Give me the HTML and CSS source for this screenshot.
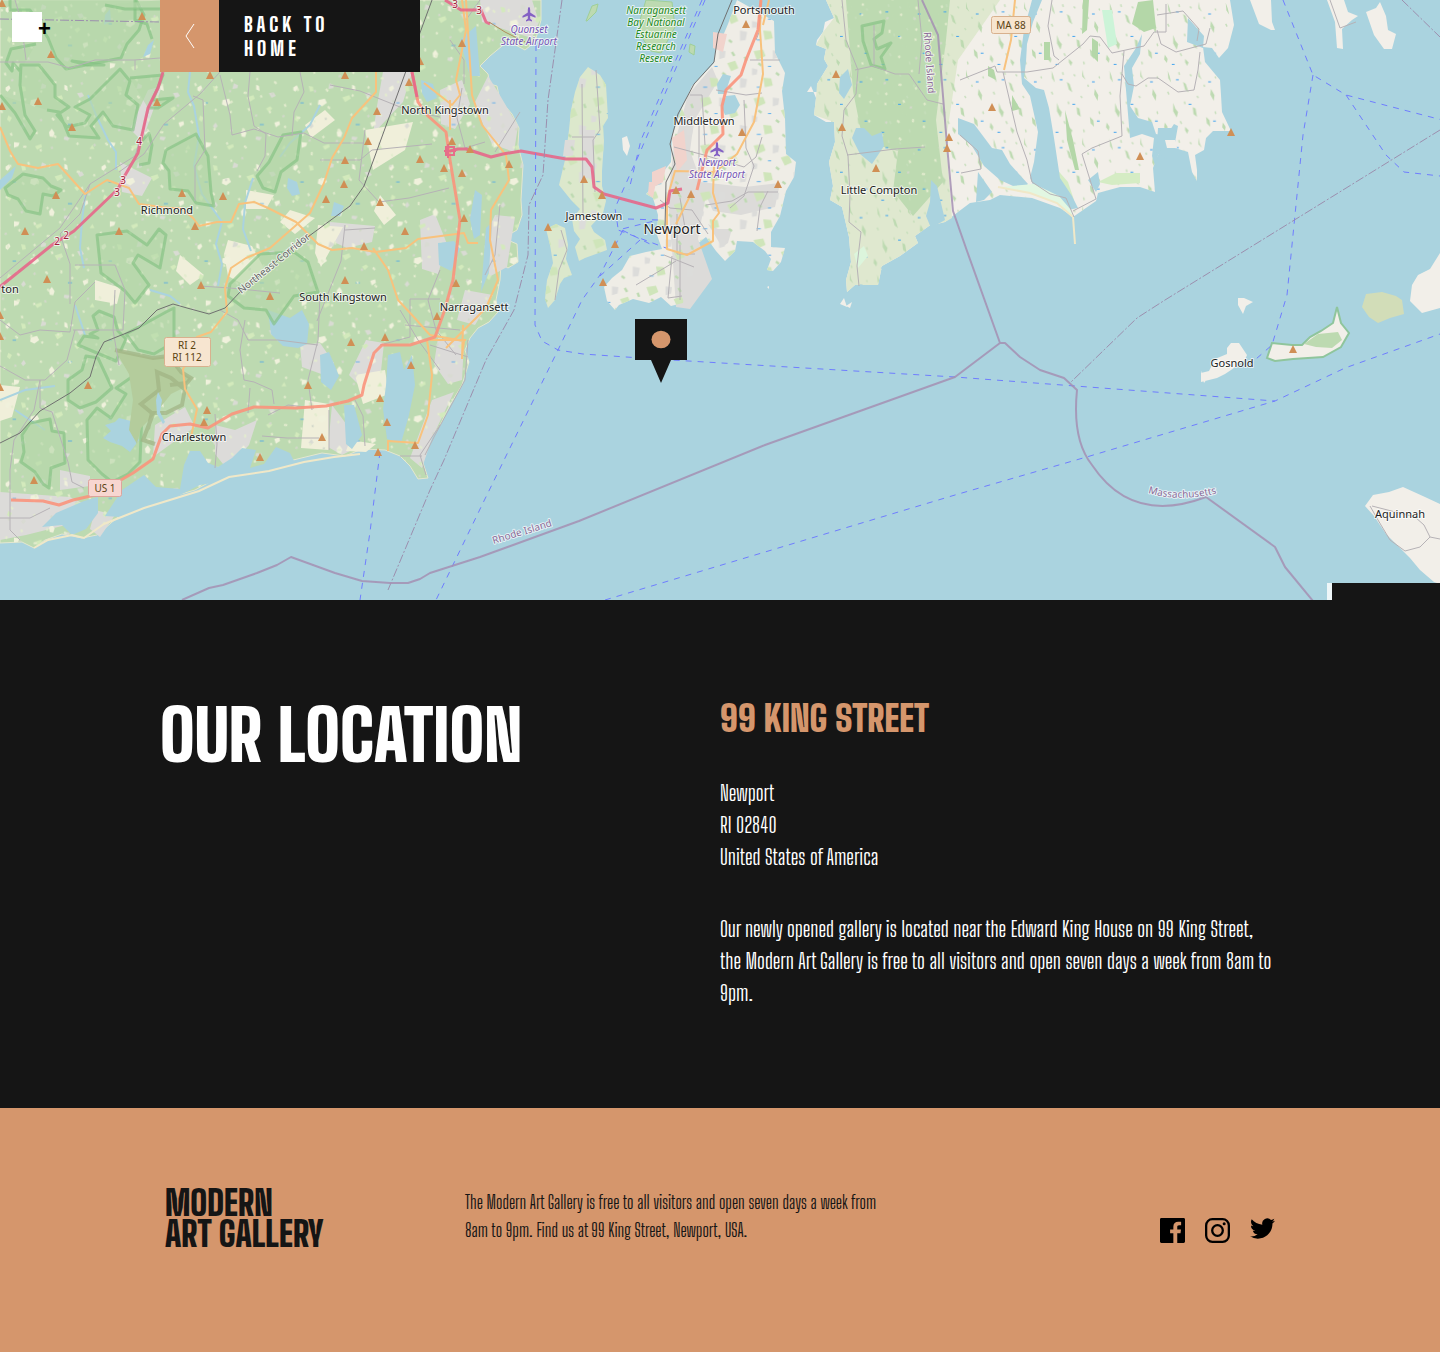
FILE: index.html
```html
<!DOCTYPE html>
<html lang="en">
<head>
<meta charset="utf-8">
<meta name="viewport" content="width=device-width, initial-scale=1">
<title>Modern Art Gallery - Our Location</title>
<link rel="stylesheet" href="styles.css">
</head>
<body>
<header class="map">
<svg class="map-canvas" viewBox="0 0 1440 600" preserveAspectRatio="xMidYMid slice" role="img" aria-label="Map of Newport, Rhode Island">
<defs>
<pattern id="fields" width="137" height="113" patternUnits="userSpaceOnUse" patternTransform="scale(.7)">
<g fill="#f0f1dc"><path d="M8 12l5-3 2 4-4 5-3-2zM44 30l9-2 3 6-7 5-6-3zM92 8l4 2 1 7-5-2zM118 62l7-2 1 5-6 4zM70 76l4-5 4 6-2 6-5-1zM20 90l8 1-2 5-6 2z"/></g>
<g fill="#d3eabc"><path d="M30 10l6 1 1 6-5 1zM78 26l10-3 2 5-8 5zM12 52l5 3-3 6-4-3zM106 42l6-3 3 3-5 5zM50 96l9-3 1 4-7 4zM128 100l4-6 3 6z"/></g>
<g fill="#d9dbd3"><path d="M60 6l6 3-1 4-7 1zM110 20l7-1 3 5-6 3zM34 62l3 5-4 4-3-4zM92 82l8 1-3 5-6-2z"/></g>
<path d="M18 34h5M97 65h6" stroke="#3aa0ee" stroke-width="1"/>
</pattern>
<pattern id="crumbs" width="59" height="71" patternUnits="userSpaceOnUse" patternTransform="rotate(25)">
<path d="M5 8l2 1M20 3l1 2M38 14l3 1M52 6l1 3M12 26l2 1M30 33l1 2M47 29l3 1M7 45l2 2M24 52l3-1M41 47l1 2M55 58l2 1M16 65l2 1M35 64l2 2" stroke="#e3ecce" stroke-width="2"/>
<path d="M28 20l2 1M50 40l1 2M10 57l2-1M44 68l2-1" stroke="#d3d8ca" stroke-width="2"/>
</pattern>
<pattern id="copses" width="83" height="97" patternUnits="userSpaceOnUse" patternTransform="scale(.7)">
<path d="M8 4l3 8 2 9-4-6zM30 20l4 3 4 12-5-4zM52 2l2 9 3 6-5-5zM70 30l5 9-1 8-5-9zM16 50l3 8 4 5-2 8-5-9zM44 56l4 2 2 12-5-4zM63 70l5 5 1 9-5-5zM4 78l4 6-1 6-4-5zM33 84l5 5-2 5-3-5z" fill="#bddab1"/>
<path d="M24 6l1 4M40 9l2 3M60 24l1 3M8 34l2 4M50 40l2 3M32 48l1 4M76 62l1 4M26 76l2 4M54 88l1 4M76 12l1 3" stroke="#c6debb" stroke-width="2"/>
<path d="M20 17h4M66 20h4M38 52h4M73 76h4M14 92h4" stroke="#3aa0ee" stroke-width="1.400"/>
</pattern>
<pattern id="town" width="67" height="59" patternUnits="userSpaceOnUse" patternTransform="scale(.8)">
<path d="M4 5l12-2 3 8-11 5zM38 20l10-3 4 9-9 4zM16 38l10 1 2 9-10 2z" fill="#cfe5ba"/>
<path d="M28 4l8 1-1 8-7 2zM54 38l9 2-2 10-7 1zM2 26l7 2-1 6-6 1z" fill="#dcdcda"/>
<path d="M44 6l3 5M10 20l4 3M32 32l4 3M60 12l2 5M40 50l4 3" stroke="#bddab1" stroke-width="3"/>
<path d="M22 24h4M8 50h5" stroke="#3aa0ee"/>
</pattern>
<g id="peak"><path d="M-4 4L0-4L4 4z" fill="#d08f55"/></g>
<g id="plane" fill="#8461c4"><path d="M0-7q1.200 0 1.200 3v2.500l5.300 3.500v1.800l-5.300-2v3l1.800 1.500v1.200L0 6.500l-3 1V6.300L-1.200 4.800v-3l-5.300 2V2l5.300-3.500V-4q0-3 1.200-3z"/></g>
<path id="west" d="M0 0H541L541 20 535 42 525 50 508 41 490 56 480 66 488 74 490 84 497 86 500 100 512 114 519 128 518 145 523 165 521 200 522 215 517 230 503 238 517 244 518 262 508 268 501 264 500 280 496 300 498 312 489 322 478 328 470 338 465 350 469 362 462 385 450 405 440 425 426 444 422 460 428 478 418 479 410 466 400 456 385 450 362 449 345 456 322 453 285 462 260 472 217 478 195 490 160 500 118 517 97 535 82 538 62 534 45 540 34 548 22 542 0 543z"/>
<path id="east" d="M826 0L834 18 825 22 823 32 817 40 816 45 826 49 824 59 828 66 817 84 818 92 807 92 811 86 816 98 814 115 826 122 834 122 835 142 829 162 833 186 830 200 842 207 849 237 851 262 846 280 847 292 855 285 878 285 882 266 900 256 918 243 915 236 929 226 945 222 958 212 970 203 990 200 1000 195 1032 198 1060 208 1073 217 1096 201 1098 193 1120 187 1140 187 1155 192 1153 168 1158 155 1162 148 1175 148 1188 152 1192 172 1197 181 1197 170 1195 155 1204 150 1206 138 1213 131 1231 131 1222 112 1221 95 1220 80 1205 62 1203 47 1212 48 1219 58 1228 48 1234 25 1230 0z"/>
<path id="aquidneck" d="M737 0l-9 24-6 14-6 5-2 20-22 23-10 22-10 28-1 26-8 10-11 2 10 10-8 2-8 8 7 4 5 17-1 20 5 14-16 3-16 4-8 14-10 8-8 9 3 14 8 9 4-5 14-6 16 4 12-6 10 9 12-3 4-18 8-8-2-12 3-20 10-8 10 14 9 10 10-10 2-10 16 1 12 9 6 8-4 11 6 1 8-9 4-14-14-1 0-15 9-16 6-25 8-14 2-15-10-8-1-36-3-27 3-18-10-20-1-32z"/>
<path id="conanicut" d="M588 67l-8 10-5 15-4 18-2 20-4 30-6 25 12 15 9 9-8 10 2 12 6 8-5 8 4 14 6-3 22-8-2-10-11-8-3-6 12-13 3-12-4-15 0-15 2-30-1-15 5-8-2-33-6-10z"/>
<path id="beavertail" d="M546 229l10-5 9 4 3 17-2 14 6 16-8 3-4 6-5 16-7 8-3-9 2-19 6-17-3-18z"/>
</defs>

<rect width="1440" height="600" fill="#aad3df"/>
<use href="#west" fill="#bddab1" stroke="#e4e7cf"/>
<use href="#east" fill="#f2efe9"/>
<path d="M826 0H1000L958 60 946 140 952 218 945 222 929 226 915 236 918 243 900 256 882 266 878 285 855 285 847 292 846 280 851 262 849 237 842 207 830 200 833 186 829 162 835 142 834 122 814 115 816 98 817 84 828 66 824 59 826 49 816 45 823 32 834 18z" fill="#dfe8cf"/>
<path d="M846 0h104l-4 40-10 80 7 62-30 34-20-25 5-40-35-10-10-50z" fill="#bddab1"/>
<use href="#aquidneck" fill="#efede6"/>
<use href="#conanicut" fill="#dce8cc"/>
<use href="#beavertail" fill="#dce8cc"/>

<g fill="#dcdbd9">
<path d="M480 0l52 0 7 22-7 16-20-6-30-10zM488 76l10 16 20 34-4 26-22-8-18-40zM440 90l22-10 8 24-15 25-14-5zM420 220l15-6 12 30-9 30-16-5zM495 215l20 2-8 50-18 10-4-40zM465 290l28 5-18 30-18-5zM438 338l26 4-2 38-14 4-14-20zM432 400l22-8-22 46-10 30-12-10zM366 340l18 3-3 28-22 14-10-10zM300 345l20-2 14 20-10 12-22-8zM330 222l45 4-3 16-25 6-20-9zM120 162l32 16-10 18-20-4zM148 90l14-4-20 55-12-12zM215 425l20 5 22-10-8 25-22 24-12-15zM332 405l30 40-20 10-14-8zM0 492l70 5 16 8-20 20-40 10-26 5zM95 510l20 5-15 22-10-8zM60 470l30 6 0 10-30 4zM385 60l30 2-12 40-30 32 4-28zM155 425l30-18 10 20-20 14-22 16z"/>
<path d="M674 145l14-50 24-28 6 14-24 40-4 30 16 44-8 44 14 40-22 30-14-2-4-58-4-50zM700 182l45 5 35-4-5 24-34 8-28-4zM708 224l10 5 14 0-4 14-6 4zM583 130l12 0-2 50-12-4zM565 140l10 0-2 16-10 0z"/>
</g>
<g fill="#f0efda">
<path d="M228 240l24 6 14 26-20 14-18-10-4-22zM246 190l28 5-8 14-20 0zM290 210l25 8-20 16-15-12zM318 225l25 2-22 40-6-14zM365 130l48-8-8 28-32 20zM380 195l16 20-12 10-10-14zM355 375l30-5 4 24-26 10zM305 400l24 4 0 46-28-2zM95 280l26 8-4 16-22-4zM0 385l20 2-8 30-12 4zM180 255l24 20-14 10-14-14zM350 440l26 4-10 8-20-1zM305 125l20-15 10 10-24 18z"/>
</g>
<use href="#west" fill="url(#fields)"/>
<use href="#west" fill="url(#crumbs)"/>
<use href="#east" fill="url(#copses)"/>
<use href="#aquidneck" fill="url(#town)"/>
<use href="#conanicut" fill="url(#town)"/>
<use href="#beavertail" fill="url(#town)"/>
<path d="M846 0h104l-4 40-10 80 7 62-30 34-20-25 5-40-35-10-10-50z" fill="url(#crumbs)"/>
<path d="M1138 2l15-2 3 28-12 4-12-8zM1083 0l6 0-2 30-5 4zM1092 38l6 4 0 20-6-6zM1044 42l6 0 0 18-6 0zM988 66l6 4 2 10-8-4zM1012 95l8 14-8 2zM1065 110l8 30 6 30-4 0-8-30z" fill="#b4d7a8"/>
<path d="M1102 10l10 0 5 34-9 4z" fill="#ccf4d8"/>
<path d="M1040 184l14-18 14 16 6 18-14 0zM1098 182l18-9 24 0 0 10-28 2z" fill="#d5ecc4"/>
<path d="M672 138l12-8 3 30-10 12zM652 172l14-6-3 16-11 6zM649 182l7 0-3 16-5-4zM713 32l14 2-4 18-10-4z" fill="#f1d3cc"/>
<path d="M854 254l10-8 4 10-10 12z" fill="#dcf5dc"/>

<g class="water">
<path d="M268 310l22 8 12-8 7 14-2 20-9 4-15-2-12-12z"/>
<path d="M388 355l12-3 4 18 8-15 3 30-6 30-8 28-14-4-4-30 3-24zM344 405l10 0 8 30-10 14-6-5zM320 355l9-3 10 24-8 14-10-8z"/>
<path d="M122 490l22-15 12 12 24 2 4-24 6-14 10 0 8 12 10 4 14-9 10-10 14 2-6 18 14-4 12-17 14 6 6 12-30 8-36 7-30 5-26 13-54 19-15-1z"/>
<path d="M42 527l14-14 28-12 14-4 0 16-12 16-14 6-10-10z"/>
<path d="M438 243l16-2 6 8-9 22-12-6zM475 190l7 5-2 40-6 4-4-20zM288 178l9 4 3 12-8 2-5-8zM334 202l10 4-4 10-9 0zM0 180l16-14-4 12-12 12zM105 15l5-6 1 12-7 4zM148 45l6-5-4 14-7 3zM421 80l12 4 4 14-10 4-5-9zM460 40l16-14 4 50-10 0zM486 228l6-6-3 50-8 20z"/>
<path d="M717 84l6-10 8 2-6 18-7 0zM722 108l4-12 9-1 5 10-5 8-10 2zM856 128l8 0 8 8 10-4 2 14-12 18-12-10-8-16zM840 77l8-8 4 16-8 14-5-6zM931 180l6 6 8 34-14 8-5-12 4-14z"/>
<path d="M1032 0l10 0-9 22-6 22-1 18-2 16 12 10 8 2 5 18 5 30 6 40 12 18 6 12-10 2-12-10-18-4-8-18 4-16 4-30-8-36-8-12-2-24 4-30z"/>
<path d="M958 118l16 6 18 24 10 2 8 14 18 20-6 6-22-10-16-14-12-20-14-12zM978 172l14 20-8 8-8 2z"/>
<path d="M1124 66l12-18 6-14-2 20-8 14 2 18-4 20 8 12 14 4 4 12 10 2 8-12 4 2-4 22-6 12-10-6-2 14-4-12 2-18-12-4-12 4-2-24zM1188 18l16 18-1 12-16-6zM1088 180l10-8 2 12-4 8z"/>
<path d="M1158 128l14 0-2 14-8 4-6 14z"/>
</g>
<path d="M1165 140l10 0 2 8-10 0z" fill="#f2efe9"/>
<g class="stream">
<path d="M190 72l-2 20 6 14 5 30-5 30 8 28 20 28-6 22 6 20-4 22M253 178l-8 25-2 26 8 22M88 95l8 20 12 25 8 12 0 18M320 105l-10 20-20 18-10 14M86 190l-4 30-2 28 4 20M0 400l25-10 30-4M150 290l20 6 10 8M75 305l10 30M15 410l30 20"/>
</g>

<g class="reserve">
<path d="M10 0l0 10 20 0 18 28 8 20 10 11 20-4 35-7 6-14 12-14 5-15-8-15M36 44l-25 5-5 14 6 8 1-8 7 8M0 95l15 18 15 26 5-8-10-16-5-30 1-20 18 0 16 20 0 12 14 10-12 8 10 12 18-4 5-8-15-8 15-8 20-20 10-10 10 12-4 14 12 10-5 25-20-4-10-14-12 14 8 12-30-2-10-24-12-2"/>
<path d="M5 188l18-14 20 4 8 8 10 4-8 6-10-2-3 20-14-3-8-12-10-4zM166 150l30-16 12 22 3 36 3 14-18-3-8-12-18-2-1-18-6-8zM283 135l18-3-4 28-16 12-6 20-12-4-6-12 12-14zM97 235l30-4 20 14 12-16 7 6-6 33-22-13-5 8 16 22-14 18-10-12-24-18z"/>
<path d="M78 345l6-9 14 2-8-4 8-4-5-14 6-5 15 6 4 14 8 8-10 22zM87 420l10-12 14 10 15-24-10-6 20-14 6 12 0 26-2 50-12 12-16 8-10-8-14-14z"/>
<path d="M68 380l14-10 4-14 12 2 14 30-16 14-16 6-12-8z"/>
<path d="M22 435l8-12 20-4 2 12 12 2 1 30-14 5-2 20-6-4-8-12-14-10 3-10zM126 334l40-22 8-4 0 34-20 12-16-4zM228 296l2-12 30-30 34-2 14 10 10 30-24 4-20 28-8-14-22-2zM135 0l0 20 12 4 5 15M130 78l33-3-10 25 20-2-15 10-10 0M140 143l9-10 3 12-3 18-10 2"/>
<path d="M104 65l-16 0-16-4zM105 5l20 4 24 0 12 0 2-9"/>
<path d="M862 26l22-5-2 12-8 6 3 10 14-6-10 14 4 12-14-4-8-24z"/>
</g>
<g class="water"><path d="M105 425l10-3 4-4 12 3 1 9 7 10-9 12-8-6-12-4-7-4 8-7z"/></g>
<path d="M115 350l38 8 16-2 12 16 10 6-8 10-12 6-16 20-14 14-4 16-8-14 4-30-4-26z" fill="#b4cc9c"/>
<path class="range" d="M115 350l38 8 16-2 12 16 10 6-8 10-12-10-14-6 2 18-18 14 12 10-10 26 12 4M170 385l16-2-4 22-16 8-14 0-4 16"/>
<path d="M158 392l4 8-2 12 5 10-2 2-6-10-1-14z" fill="#aad3df"/>
<path d="M1366 294l16-2 14 4 6 4 2 14-14 4-12 5-9-6-7-10z" fill="#d2ddb8"/>
<g fill="#f2efe9">
<path d="M1440 253l-10 16-12 6-6 10-2 16 12 12 18-5zM1365 506l8-11 16-3 14-5 22 10 15 7v80l-6-2-14-12-10-12-24-24-12-18z"/>
<path d="M1201 382l0-9 8-2 6-12 12-5 0-6 4-5 8 0 8 12-2 5-14 10-6 4-8 4zM1204 383l-3-12 6 8zM1238 298l6 0 9 4-7 4-3 8-5-9zM1250 0l9 24 12 6 4 0-3-8-1-22zM1327 0l8 22 2 26 6 1-1-20 10-9 6-4-10-4-4-12zM1366 12l10-4 4-6 6 14 2 14 8 4-4 15-8 0-10-14z"/>
<path d="M622 138l5-2 3 10-3 10-4-6zM840 304l4-6 3 9zM846 306l6-4-2 6zM767 287l2-1v3z"/>
</g>
<path d="M1267 358l5-15 20 2 10 0 8-8 11-6 12-8 4-16 4 16 8 10-8 14-18 10-30 2-18 2z" fill="#f2efe9" stroke="#8fc59c" stroke-width="2"/>
<path d="M1304 344l14-10 20-2 4 8-10 8-16-1z" fill="#bddab1"/>
<path d="M586 21l6-15 6-2-2 8-9 9zM640 20l6-20 26 2 3 25-14 26-10-2-10-15zM690 44l5 2-1 9-5-3z" fill="#bddab1" stroke="#9fcf98"/>
<path d="M1000 187l32 6 28 12 13 11-2-6-12-14-25-12z" fill="#e2f7e2"/>
<path d="M998 187l32 6 27 10 16 14M1073 217l2 27M34 548l14-8 24-5 12 3 20-14 40-16 55-17 30-14 40-6 35-9 30-5 26-3" fill="none" stroke="#f0e8c8" stroke-width="2"/>

<g class="road">
<path d="M15 0l6 20 5 40M0 62l48 0 22 6 25-8 39 0 26-2M135 60v10M0 278l60-50 30-44 45-28 18-60 10-22M90 184l-10 30-20 20 10 30 0 40M220 72l-20 22-36 30-20 30-25 18M193 96l10 4 2 50-10 16 0 35M250 72l-2 24 6 30 12 8-1 22-8 15M220 75l10 40 2 20 22-6 24 8 26-4 20 10 40 0M300 72l4 20-10 20-2 24M330 85l30 6 50 20 30 6M320 160l40 0 12-10 60-6M365 130l-6 50 20 22 30-4 40-10M345 225l-4 36-16 40-8 20M345 230l30-2M200 286l30 2 50 5M75 265l40 0 10 25-2 40-50 0M115 290l-2 40 6 35M0 320l20 15 20-5 30 2 5-30 20-20M75 330l-8 30-22 20-20 0-25-14M40 380l0 28 12 4 16 50 4 20 12 6M40 380l-6 30-20 30-4 30 0 60 10 10M0 518l30 0 20-10M320 295l-2 45-10 40 4 30M318 345l-40-5-30 0-10-20-18-10M245 320l-5 30 4 30 10 2 18 8 2 14M268 415l20-10 26 3M250 388l-2 25M215 414l2 30-2 24M262 436l25 2 32 0M329 410v40M355 400l8 16 2 30M380 345l30-8 0-38 30 0M405 325l55 5M400 310l18 30 22 30M440 270l-12 30 8 30 20 25M430 345l38 12M468 340l-3 40-30 55-10 20M440 425l-20 30 6 20M400 456l22 0M462 88l-5 30 8 30 20-6M450 40l14 20 0 24M480 0l-14 20M520 112l-25 40M500 205l-5 50-10 20"/>
<path d="M582 84l1 132M596 70l4 60-7 10 2 52M572 137h22M561 230l6 20-8 20-4 30M699 120l0 50M674 147l30 8 40 12 12-10 6-20M716 90l30 5 16-2M744 100l2 48 8 18-10 30-14 12M695 254h-18v-40M660 200l10 8 22 2 16 24M768 191l-8 16-3 24M680 198l5 30M706 205l26-4 16-9h30M750 60h30M756 40l4-10M690 95l12 0 3 50M664 255l30 12M680 245v55M672 256l-4 42 14-2M636 285l40-24"/>
<path d="M842 0l4 40 12 30-2 24-12 16-2 26 6 20 2 40-1 26 12 10-4 34 2 20M855 70l18-4 22 8 14 0 18 26 16 4M874 25v40M918 0l4 40-3 34M847 155l48-6 30-2M960 80l35-14 2 6 30 0 26-4 30-24 7-8 10 1 12 16 32-7 10-14h12v-28M1052 0l-4 26 6 30 5 4M1003 72l14 60 10 28 5 22 18 12 16 4 8 19M1073 211l23-12-14-45 10-6 30-12-2-40 4-45M1122 74l6 10 8 2 12-8 10 0 20 14 16-2 4-20 2-18M1157 15l26-4 16 18-2 12M1157 30l4 14 15 8 30-8 4-16M960 135l18 16 3 18-20 4M1330 0l10 28 16-6"/>
<path d="M1370 506L1378 520 1390 540 1405 551 1420 547 1430 537 1440 539M1372 506L1415 517 1424 525 1430 537"/>
</g>
<g class="secondary">
<path d="M0 127l10 24 8 13 20 4 20-4 27 30 22-14 22 8 10 16 30 4 12 0 12 10 6 8 18-4 14 0 8-18 15-2 14 6 28 14 22 22 14 6 20-2 24 4 30-4 12-9 46-6 4 10 10 0M376 72l0 20-24 26-8 20-12 20-8 25-14 30-40 35-24 10-15 10-6 20 2 24-16 20-14 5-2 14-12 18 2 20 12 20-3 14-3 14M462 0l4 30-10 50 4 15-8 10-28-22M450 100l0 30M373 248l15 22 10 30 14 15 18 20 34 6-2 16M466 0l6 95 10 30 24 30 3 25-18 30-1 30 8 40-12 28-20 20-20 20M463 325l-1 34M427 340l5 35-4 40-10 28-30-2 0 10M430 340l36 0"/>
<path d="M761 0l-1 30 3 44-9 48-17 32-22 18-40-1-8 28v50l20 6 26-14 0-20 6-8-6-20 1-28M691 194l-15 30M769 0l-6 25M1015 0l-4 40-7 30"/>
</g>
<path class="primary" d="M412 72l6 30 10 14 18 16 4 28 10 60-7 60-9 32-9 25-25 8-28 0-8 8-10 32-2 10-14 6-22 5-30 2-42-1-22 7-24 14-18-4-20 2-8 8-9 25-20 14-38 22-22 5-14 5-16-4-32-1M761 0l-3 30-12 30-5 15-15 15-4 16 1 28-16 16-10 40"/>
<path class="trunk" d="M163 72l-5 16-10 20-10 45-14 24-6 12-44 42-22 14-56 45M445 0l16 10 20 0 5 12 4 2M412 72l5 25M450 151l8-2 8 0 25 8 12-3 18-3 45 8 20 0 6 8 2 20 10 7 52 14 12-5 2-12 12-2"/>
<path d="M446 147h8v8h-8zM448 144v14M444 151h12" fill="none" stroke="#e66e89" stroke-width="2"/>
<g class="rail"><path d="M432 0l-22 60-46 126-14 20-60 44-50 42-15 16-16 6-22-6-14-4-16 6-18 18-35 14-8 15-6 20-20 16-30 18-20 22-20 10M732 0l-14 34-4 28-20 22-16 30-8 30 5 20-9 18-1 46"/></g>
<path d="M489 22l16 10 20 10" stroke="#b18c5a" fill="none"/>

<g class="ferry">
<path d="M536 45l-1 280 7 16 16 9 25 4 72 5 300 18 320 24M623 230L600 275 582 300 558 350 482 505 436 600M605 600L955 495 1090 456 1275 401 1345 368 1440 334M380 452l-10 80-10 68M705 0l-64 150-26 58 3 20 36 18M702 0l-61 140-12 50M628 219l30 1-40 10 48 18M1283 0l30 75 33 20 100 26M1313 75l-10 60-8 80-8 80-15 50-16 14M1346 95l40 60 18 17 36 4M640 240l-40 36"/>
</g>
<g class="county"><path d="M562 0l-14 100-5 75-14 30-1 50-14 55-28 50-42 100-14 30-42 100M0 19l160 3M1402 0l38 37M1440 130L1165 300l-28 18-66 64"/></g>
<g class="state">
<path d="M922 0L938 35 947 145 953 211 967 251 1000 343 955 377 765 445 579 521 480 557 430 573 420 579 408 583 390 583 362 581 335 573 291 557 277 565 257 573 223 585 209 588 182 600M1000 343l5 0 15 14 20 13 24 8 13 12q-5 50 15 75 40 60 114 32l69 50 10 20 28 34"/>
</g>

<g>
<use href="#peak" x="2" y="3"/><use href="#peak" x="142" y="16"/><use href="#peak" x="51" y="54"/><use href="#peak" x="38" y="101"/><use href="#peak" x="2" y="106"/><use href="#peak" x="72" y="127"/><use href="#peak" x="56" y="195"/><use href="#peak" x="25" y="231"/><use href="#peak" x="119" y="231"/><use href="#peak" x="47" y="279"/><use href="#peak" x="201" y="285"/><use href="#peak" x="195" y="226"/><use href="#peak" x="182" y="193"/><use href="#peak" x="223" y="196"/><use href="#peak" x="210" y="75"/><use href="#peak" x="345" y="75"/><use href="#peak" x="157" y="102"/><use href="#peak" x="377" y="111"/><use href="#peak" x="368" y="141"/><use href="#peak" x="345" y="160"/><use href="#peak" x="344" y="184"/><use href="#peak" x="326" y="199"/><use href="#peak" x="380" y="202"/><use href="#peak" x="405" y="231"/><use href="#peak" x="364" y="246"/><use href="#peak" x="345" y="280"/><use href="#peak" x="270" y="296"/><use href="#peak" x="409" y="82"/><use href="#peak" x="452" y="141"/><use href="#peak" x="420" y="159"/><use href="#peak" x="444" y="168"/><use href="#peak" x="462" y="173"/><use href="#peak" x="470" y="149"/><use href="#peak" x="464" y="218"/><use href="#peak" x="456" y="283"/><use href="#peak" x="420" y="61"/><use href="#peak" x="462" y="43"/>
<use href="#peak" x="509" y="164"/><use href="#peak" x="584" y="179"/><use href="#peak" x="602" y="195"/><use href="#peak" x="548" y="227"/><use href="#peak" x="615" y="244"/><use href="#peak" x="603" y="282"/><use href="#peak" x="676" y="190"/><use href="#peak" x="691" y="194"/><use href="#peak" x="742" y="132"/><use href="#peak" x="746" y="24"/><use href="#peak" x="778" y="184"/><use href="#peak" x="836" y="74"/><use href="#peak" x="842" y="127"/><use href="#peak" x="876" y="168"/><use href="#peak" x="949" y="137"/><use href="#peak" x="947" y="148"/><use href="#peak" x="992" y="107"/><use href="#peak" x="1140" y="156"/><use href="#peak" x="1231" y="132"/><use href="#peak" x="1293" y="349"/>
<use href="#peak" x="0" y="315"/><use href="#peak" x="0" y="336"/><use href="#peak" x="0" y="387"/><use href="#peak" x="88" y="385"/><use href="#peak" x="351" y="342"/><use href="#peak" x="385" y="337"/><use href="#peak" x="411" y="365"/><use href="#peak" x="437" y="316"/><use href="#peak" x="308" y="385"/><use href="#peak" x="207" y="410"/><use href="#peak" x="204" y="422"/><use href="#peak" x="380" y="398"/><use href="#peak" x="387" y="422"/><use href="#peak" x="322" y="437"/><use href="#peak" x="260" y="457"/><use href="#peak" x="378" y="452"/><use href="#peak" x="415" y="445"/><use href="#peak" x="34" y="480"/>
</g>
<use href="#plane" x="529" y="14"/><use href="#plane" x="717" y="149"/>

<g class="shield">
<rect x="991.500" y="16.500" width="39" height="17" rx="2"/><text x="1011" y="29">MA 88</text>
<rect x="164.500" y="337.500" width="46" height="29" rx="2"/><text x="187" y="349">RI 2</text><text x="187" y="361">RI 112</text>
<rect class="us" x="88.500" y="479.500" width="33" height="17" rx="2"/><text x="105" y="492">US 1</text>
</g>
<g class="ref"><text x="139" y="145">4</text><text x="123" y="184">3</text><text x="117" y="196">3</text><text x="66" y="239">2</text><text x="57" y="245">2</text><text x="455" y="8">3</text><text x="479" y="14">3</text></g>
<g class="place">
<text x="445" y="114">North Kingstown</text><text x="167" y="214">Richmond</text><text x="343" y="301">South Kingstown</text><text x="474" y="311">Narragansett</text><text x="194" y="441">Charlestown</text><text x="594" y="220">Jamestown</text><text x="704" y="125">Middletown</text><text x="764" y="14">Portsmouth</text><text x="879" y="194">Little Compton</text><text x="1232" y="367">Gosnold</text><text x="1400" y="518">Aquinnah</text><text x="10" y="293">ton</text>
<text class="city" x="672" y="234">Newport</text>
</g>
<g class="airport"><text x="529" y="33">Quonset</text><text x="529" y="45">State Airport</text><text x="717" y="166">Newport</text><text x="717" y="178">State Airport</text></g>
<g class="park"><text x="656" y="14">Narragansett</text><text x="656" y="26">Bay National</text><text x="656" y="38">Estuarine</text><text x="656" y="50">Research</text><text x="656" y="62">Reserve</text></g>
<g class="boundary">
<text transform="translate(523 535) rotate(-17)">Rhode Island</text>
<text transform="translate(926 63) rotate(86)">Rhode Island</text>
<path id="masscurve" d="M1148 493q34 10 74-1" fill="none" stroke="none"/>
<text class="along"><textPath href="#masscurve">Massachusetts</textPath></text>
<text class="corridor" transform="translate(276 266) rotate(-39)">Northeast Corridor</text>
</g>
<path d="M635 319h52v41h-16l-10 23-10-23h-16z" fill="#151515"/>
<ellipse cx="661" cy="339.500" rx="9.500" ry="8.800" fill="#d5966c"/>
</svg>
<button class="zoom-in" type="button" aria-label="Zoom in"><span>+</span></button>
<nav class="back-bar">
<a class="back" href="#">
<span class="back-icon"><svg width="10" height="26" viewBox="0 0 10 26" aria-hidden="true"><path d="M9 1L1 13l8 12" fill="none" stroke="#fff"/></svg></span>
<span class="back-text">BACK TO HOME</span>
</a>
</nav>
<div class="attribution"></div>
</header>
<main class="location">
<h1 class="title">OUR LOCATION</h1>
<section class="details">
<h2 class="street">99 KING STREET</h2>
<address class="address">Newport<br>RI 02840<br>United States of America</address>
<p class="about">Our newly opened gallery is located near the Edward King House on 99 King Street, the Modern Art Gallery is free to all visitors and open seven days a week from 8am to 9pm.</p>
</section>
</main>
<footer class="footer">
<a class="logo" href="#">MODERN<br>ART GALLERY</a>
<p class="footer-text">The Modern Art Gallery is free to all visitors and open seven days a week from 8am to 9pm. Find us at 99 King Street, Newport, USA.</p>
<nav class="social" aria-label="Social media">
<a href="#" aria-label="Facebook"><svg width="25" height="25" viewBox="0 0 24 24"><path d="M22.675 0H1.325C.593 0 0 .593 0 1.325v21.351C0 23.407.593 24 1.325 24H12.820v-9.294H9.692v-3.622h3.128V8.413c0-3.100 1.893-4.788 4.659-4.788 1.325 0 2.463.099 2.795.143v3.240l-1.918.001c-1.504 0-1.795.715-1.795 1.763v2.313h3.587l-.467 3.622h-3.120V24h6.116c.73 0 1.323-.593 1.323-1.325V1.325C24 .593 23.407 0 22.675 0z"/></svg></a>
<a href="#" aria-label="Instagram"><svg width="25" height="25" viewBox="0 0 24 24"><rect x="1.100" y="1.100" width="21.800" height="21.800" rx="6" fill="none" stroke="#000" stroke-width="2.200"/><circle cx="12" cy="12" r="5.100" fill="none" stroke="#000" stroke-width="2.200"/><circle cx="18.400" cy="5.600" r="1.450"/></svg></a>
<a href="#" aria-label="Twitter"><svg width="25" height="21" viewBox="0 2 24 20"><path d="M24 4.557a9.830 9.830 0 0 1-2.828.775 4.932 4.932 0 0 0 2.165-2.724 9.864 9.864 0 0 1-3.127 1.195 4.916 4.916 0 0 0-8.384 4.482C7.691 8.094 4.066 6.130 1.640 3.161a4.822 4.822 0 0 0-.666 2.475c0 1.710.87 3.213 2.188 4.096a4.904 4.904 0 0 1-2.228-.616v.061a4.923 4.923 0 0 0 3.946 4.827 4.996 4.996 0 0 1-2.212.085 4.937 4.937 0 0 0 4.604 3.417A9.868 9.868 0 0 1 0 19.540a13.995 13.995 0 0 0 7.548 2.212c9.142 0 14.307-7.721 13.995-14.646A10.025 10.025 0 0 0 24 4.557z"/></svg></a>
</nav>
</footer>
</body>
</html>
```
FILE: styles.css
```css
* { box-sizing: border-box; margin: 0; padding: 0; }
body {
  font-family: "Big Shoulders Display", "Liberation Sans Narrow", "Liberation Sans", sans-serif;
  background: #151515;
  color: #fff;
}
a { color: inherit; text-decoration: none; }

.map { position: relative; height: 600px; overflow: hidden; background: #aad3df; }
.map-canvas { display: block; width: 100%; height: 100%; }

.zoom-in {
  position: absolute; top: 12px; left: 12px;
  display: flex; align-items: center;
  width: 30px; height: 30px; padding: 4px 0 0 26px;
  border: 0; background: #fff; color: #000;
  font: bold 22px/30px "Liberation Sans", sans-serif;
}
.back-bar { position: absolute; top: 0; left: 0; right: 0; padding: 0 160px; pointer-events: none; }
.back { display: flex; width: 260px; min-height: 72px; background: #151515; pointer-events: auto; }
.back-icon { display: flex; align-items: center; justify-content: center; width: 59px; background: #d5966c; }
.back-text { flex: 1; padding: 12px 64px 12px 25px; font-size: 20px; line-height: 24px; font-weight: 800; letter-spacing: 4px; }
.attribution { position: absolute; right: 0; bottom: 0; width: 113px; height: 17px; background: #151515; border-left: 5px solid #eef6f8; }

.water path { fill: #aad3df; }
.stream path { fill: none; stroke: #aad3df; stroke-width: 2; }
.reserve path { fill: #b4d7a8; fill-opacity: .6; stroke: #7fbf7f; stroke-opacity: .6; stroke-width: 3; stroke-linejoin: round; }
.range { fill: none; stroke: #9fb283; stroke-opacity: .7; stroke-width: 4; }
.road path { fill: none; stroke: #b6b2b6; stroke-width: 1; }
.secondary path { fill: none; stroke: #f8c27d; stroke-width: 2; stroke-linejoin: round; }
.primary { fill: none; stroke: #fa937c; stroke-width: 3; stroke-opacity: .9; stroke-linejoin: round; }
.trunk { fill: none; stroke: #e5678a; stroke-width: 3; stroke-opacity: .9; stroke-linejoin: round; }
.rail path { fill: none; stroke: #707070; stroke-width: 1; }
.ferry path { fill: none; stroke: #6f7dff; stroke-width: 1; stroke-dasharray: 6 6; }
.county path { fill: none; stroke: #9c8fae; stroke-width: 1; stroke-dasharray: 9 2 2 2; }
.state path { fill: none; stroke: #a58fb3; stroke-opacity: .85; stroke-width: 2; stroke-linejoin: round; }

.map-canvas text { font-family: "Noto Sans", sans-serif; font-size: 11px; text-anchor: middle; paint-order: stroke; stroke: #fff; stroke-opacity: .7; stroke-width: 2px; stroke-linejoin: round; }
.place text { fill: #222; }
.map-canvas .city { font-size: 14px; }
.shield rect { fill: #f7e5d0; stroke: #d8b18e; }
.shield .us { fill: #f7d6d0; stroke: #dda49c; }
.map-canvas .shield text { font-size: 10px; fill: #5a4210; stroke: none; }
.map-canvas .ref text { font-size: 10px; fill: #a01f3c; }
.map-canvas .airport text { font-size: 10px; font-style: italic; fill: #7455b4; }
.map-canvas .park text { font-size: 10px; font-style: italic; fill: #1d8a1d; }
.map-canvas .boundary text { font-size: 10px; fill: #8c6c98; }
.map-canvas .boundary .along { text-anchor: start; }
.map-canvas .boundary .corridor { fill: #666; }

.location {
  display: grid; grid-template-columns: 1fr 1fr;
  padding: 95px 160px 99px;
  background: #151515;
}
.title { font-size: 70px; line-height: 80px; font-weight: 900; }
.street { font-size: 36px; line-height: 48px; font-weight: 900; color: #d5966c; }
.address, .about, .footer-text { text-rendering: optimizeSpeed; }
.address { margin-top: 34px; font-size: 22px; line-height: 32px; font-style: normal; }
.about { max-width: 558px; margin-top: 40px; font-size: 22px; line-height: 32px; }

.footer {
  display: grid; grid-template-columns: 300px 1fr auto;
  padding: 80px 165px 102px;
  background: #d5966c; color: #151515;
}
.logo { font-size: 34px; line-height: 31px; font-weight: 900; white-space: nowrap; }
.footer-text { max-width: 430px; font-size: 18px; line-height: 28px; }
.social { display: flex; gap: 20px; padding-top: 30px; align-items: flex-start; }
.social svg { display: block; fill: #000; }
```
